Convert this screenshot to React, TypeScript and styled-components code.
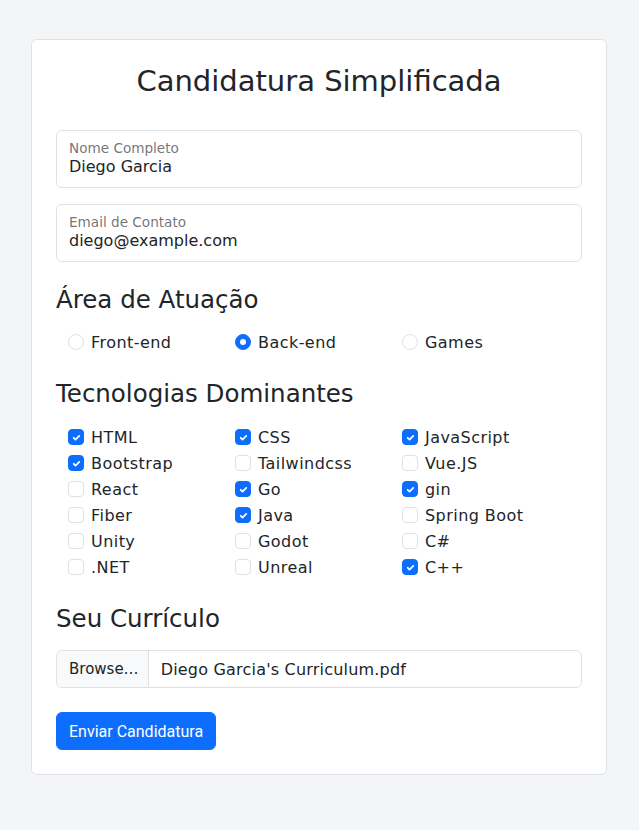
import React from "react";
import styled, { createGlobalStyle } from "styled-components";

const Global = createGlobalStyle`
  * { box-sizing: border-box; }
  html, body { margin: 0; padding: 0; }
  body {
    background: #f4f5f7;
    font-family: "DejaVu Sans", "Noto Sans", sans-serif;
    color: #212529;
  }
`;

const Page = styled.div`
  padding: 39px 31px 55px;
  display: flex;
  justify-content: flex-start;
`;

const Card = styled.form`
  width: 576px;
  background: #fff;
  border: 1px solid #dee2e6;
  border-radius: 6px;
  padding: 24px;
  display: flex;
  flex-direction: column;
`;

const Title = styled.h2`
  margin: 0 0 31px;
  font-size: 29px;
  line-height: 35px;
  font-weight: 400;
  text-align: center;
  color: #212529;
`;

const Floating = styled.div`
  height: 58px;
  border: 1px solid #dee2e6;
  border-radius: 6px;
  padding: 8px 12px 0;
  display: flex;
  flex-direction: column;
  margin-bottom: 16px;
`;

const FloatLabel = styled.span`
  font-size: 13.6px;
  line-height: 18px;
  color: rgba(33, 37, 41, 0.65);
`;

const FloatValue = styled.span`
  font-size: 16px;
  line-height: 20px;
  color: #212529;
`;

const Section = styled.h4<{ $top: number; $bottom: number }>`
  margin: ${(p) => p.$top}px 0 ${(p) => p.$bottom}px;
  font-size: 24.5px;
  line-height: 30px;
  font-weight: 400;
`;

const OptionGrid = styled.div`
  display: grid;
  grid-template-columns: repeat(3, 167px);
  padding-left: 12px;
  row-gap: 2px;
`;

const Option = styled.label`
  display: flex;
  align-items: center;
  height: 24px;
  gap: 7px;
  font-size: 16px;
  letter-spacing: 0.45px;
  color: #212529;
`;

const Box = styled.span<{ $on: boolean; $round?: boolean }>`
  width: 16px;
  height: 16px;
  flex: none;
  border-radius: ${(p) => (p.$round ? "50%" : "4px")};
  border: 1px solid ${(p) => (p.$on ? "#0d6efd" : "#dee2e6")};
  background: ${(p) => (p.$on ? "#0d6efd" : "#fff")};
  display: flex;
  align-items: center;
  justify-content: center;
`;

const Dot = styled.span`
  width: 6px;
  height: 6px;
  border-radius: 50%;
  background: #fff;
`;

const FileRow = styled.div`
  display: flex;
  height: 38px;
  border: 1px solid #dee2e6;
  border-radius: 6px;
  overflow: hidden;
  font-size: 16px;
`;

const Browse = styled.span`
  background: #f8f9fa;
  border-right: 1px solid #dee2e6;
  padding: 0 9px 0 12px;
  display: flex;
  align-items: center;
  color: #212529;
  font-size: 15px;
`;

const FileName = styled.span`
  display: flex;
  align-items: center;
  padding: 0 12px;
  letter-spacing: 0.2px;
`;

const Submit = styled.button`
  margin-top: 24px;
  align-self: flex-start;
  height: 38px;
  border: 1px solid #0d6efd;
  background: #0d6efd;
  color: #fff;
  border-radius: 6px;
  font-family: Roboto, sans-serif;
  font-size: 16px;
  padding: 0 12px;
  white-space: nowrap;
`;

const Check = () => (
  <svg width="11" height="11" viewBox="0 0 20 20">
    <path d="M5 10.5l3.2 3.2L15 7" fill="none" stroke="#fff" strokeWidth="3.2" strokeLinecap="round" strokeLinejoin="round" />
  </svg>
);

const techs: [string, boolean][] = [
  ["HTML", true], ["CSS", true], ["JavaScript", true],
  ["Bootstrap", true], ["Tailwindcss", false], ["Vue.JS", false],
  ["React", false], ["Go", true], ["gin", true],
  ["Fiber", false], ["Java", true], ["Spring Boot", false],
  ["Unity", false], ["Godot", false], ["C#", false],
  [".NET", false], ["Unreal", false], ["C++", true],
];

const areas: [string, boolean][] = [["Front-end", false], ["Back-end", true], ["Games", false]];

export default function App() {
  return (
    <>
      <Global />
      <Page>
        <Card onSubmit={(e) => e.preventDefault()}>
          <Title>Candidatura Simplificada</Title>
          <Floating>
            <FloatLabel>Nome Completo</FloatLabel>
            <FloatValue>Diego Garcia</FloatValue>
          </Floating>
          <Floating>
            <FloatLabel>Email de Contato</FloatLabel>
            <FloatValue>diego@example.com</FloatValue>
          </Floating>
          <Section $top={7} $bottom={15}>Área de Atuação</Section>
          <OptionGrid>
            {areas.map(([n, on]) => (
              <Option key={n}>
                <Box $on={on} $round>{on && <Dot />}</Box>
                {n}
              </Option>
            ))}
          </OptionGrid>
          <Section $top={25} $bottom={16}>Tecnologias Dominantes</Section>
          <OptionGrid>
            {techs.map(([n, on]) => (
              <Option key={n}>
                <Box $on={on}>{on && <Check />}</Box>
                {n}
              </Option>
            ))}
          </OptionGrid>
          <Section $top={25} $bottom={16}>Seu Currículo</Section>
          <FileRow>
            <Browse>Browse…</Browse>
            <FileName>Diego Garcia's Curriculum.pdf</FileName>
          </FileRow>
          <Submit type="submit">Enviar Candidatura</Submit>
        </Card>
      </Page>
    </>
  );
}
